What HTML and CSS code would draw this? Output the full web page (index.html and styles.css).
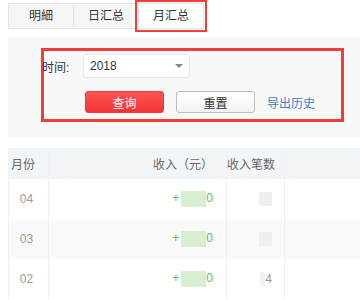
FILE: index.html
```html
<!DOCTYPE html>
<html lang="zh-CN">
<head>
    <meta charset="UTF-8">
    <meta name="viewport" content="width=device-width, initial-scale=1.0">
    <title>收入汇总</title>
    <link rel="stylesheet" href="styles.css">
</head>
<body>

    <div class="tabs">
        <div class="tab">明細</div>
        <div class="tab">日汇总</div>
        <div class="tab active">月汇总</div>
    </div>

    <div class="panel">
        <div class="search-box">
            <div class="form-row">
                <label class="form-label">时间:</label>
                <div class="select">
                    <span>2018</span>
                    <span class="caret"></span>
                </div>
            </div>
            <div class="form-row btn-row">
                <button class="btn btn-primary">查询</button>
                <button class="btn btn-default">重置</button>
                <a class="link" href="#">导出历史</a>
            </div>
        </div>
    </div>

    <table class="summary">
        <thead>
            <tr>
                <th class="col-month">月份</th>
                <th class="col-amount">收入（元）</th>
                <th class="col-count">收入笔数</th>
                <th></th>
            </tr>
        </thead>
        <tbody>
            <tr>
                <td class="col-month">04</td>
                <td class="col-amount"><span class="plus">+</span><span class="mask"></span><span class="num">0</span></td>
                <td class="col-count"><span class="mask-gray"></span></td>
                <td></td>
            </tr>
            <tr class="stripe">
                <td class="col-month">03</td>
                <td class="col-amount"><span class="plus">+</span><span class="mask"></span><span class="num">0</span></td>
                <td class="col-count"><span class="mask-gray"></span></td>
                <td></td>
            </tr>
            <tr>
                <td class="col-month">02</td>
                <td class="col-amount"><span class="plus">+</span><span class="mask"></span><span class="num">0</span></td>
                <td class="col-count"><span class="mask-gray small"></span>4</td>
                <td></td>
            </tr>
        </tbody>
    </table>

</body>
</html>
```

FILE: styles.css
```css
body {
    margin: 0;
    padding: 3px 0 0 8px;
    font-family: "Liberation Sans", "Noto Sans CJK SC", sans-serif;
    font-size: 12px;
    color: #333;
    background: #fff;
    overflow: hidden;
}
.tabs {
    display: flex;
}
.tab {
    width: 64px;
    height: 24px;
    line-height: 24px;
    text-align: center;
    font-size: 12px;
    color: #333;
    background: #f5f5f5;
    border: 1px solid #e3e3e3;
    border-right: none;
}
.tab:last-child {
    border-right: 1px solid #e3e3e3;
}
.tab.active {
    background: #fff;
    outline: 2px solid #f23c3c;
    outline-offset: 1px;
}
.panel {
    margin-top: 8px;
    background: #f8f8f8;
    padding: 11px 16px 16px 33px;
}
.search-box {
    border: 3px solid #f23c3c;
    padding: 3px 0 6px 0;
}
.form-row {
    display: flex;
    align-items: center;
}
.form-label {
    width: 41px;
    margin-left: -2px;
    font-size: 12px;
    color: #333;
}
.select {
    width: 93px;
    height: 22px;
    border: 1px solid #e6e6e6;
    border-radius: 3px;
    background: #fff;
    display: flex;
    align-items: center;
    justify-content: space-between;
    padding: 0 6px;
    font-size: 12px;
    color: #333;
}
.caret {
    width: 0;
    height: 0;
    border-left: 4px solid transparent;
    border-right: 4px solid transparent;
    border-top: 4px solid #888;
}
.btn-row {
    margin-top: 13px;
    padding-left: 41px;
}
.btn {
    width: 79px;
    height: 22px;
    font-family: inherit;
    font-size: 12px;
    border-radius: 3px;
    cursor: pointer;
    padding: 0;
    margin-right: 12px;
}
.btn-primary {
    border: 1px solid #f23a3a;
    background: linear-gradient(#ff5454, #f03535);
    color: #fff;
}
.btn-default {
    border: 1px solid #bcbcbc;
    background: linear-gradient(#fff, #f2f2f2);
    color: #333;
}
.link {
    color: #3b7fc4;
    font-size: 12px;
    text-decoration: none;
}
.summary {
    margin-top: 10px;
    border-collapse: collapse;
    width: 360px;
    table-layout: fixed;
}
.summary th,
.summary td {
    box-sizing: border-box;
    height: 40px;
    padding: 0;
    border-left: 1px solid #edf0f4;
    font-weight: normal;
    white-space: nowrap;
}
.summary th {
    height: 31px;
    background: #f2f5f8;
    color: #666;
    font-size: 12px;
}
.summary td {
    color: #999;
    font-size: 12px;
}
.summary tr.stripe td {
    background: #f9f9f9;
}
.summary .col-month {
    width: 40px;
}
th.col-month {
    text-align: left;
    padding-left: 2px;
}
td.col-month {
    text-align: center;
    padding-right: 4px;
}
.summary .col-amount {
    width: 178px;
    text-align: right;
    padding-right: 13px;
}
th.col-amount {
    padding-right: 2px;
}
.summary .col-count {
    width: 58px;
    text-align: right;
    padding-right: 12px;
}
th.col-count {
    padding-right: 0;
}
.plus,
.num {
    color: #5bbf3a;
}
.mask {
    display: inline-block;
    width: 25px;
    height: 16px;
    background: #d7eed0;
    vertical-align: middle;
    margin-left: 2px;
}
.mask-gray {
    display: inline-block;
    width: 13px;
    height: 14px;
    background: #efefef;
    vertical-align: middle;
}
.mask-gray.small {
    width: 5px;
    background: #f2f2f2;
}
```
